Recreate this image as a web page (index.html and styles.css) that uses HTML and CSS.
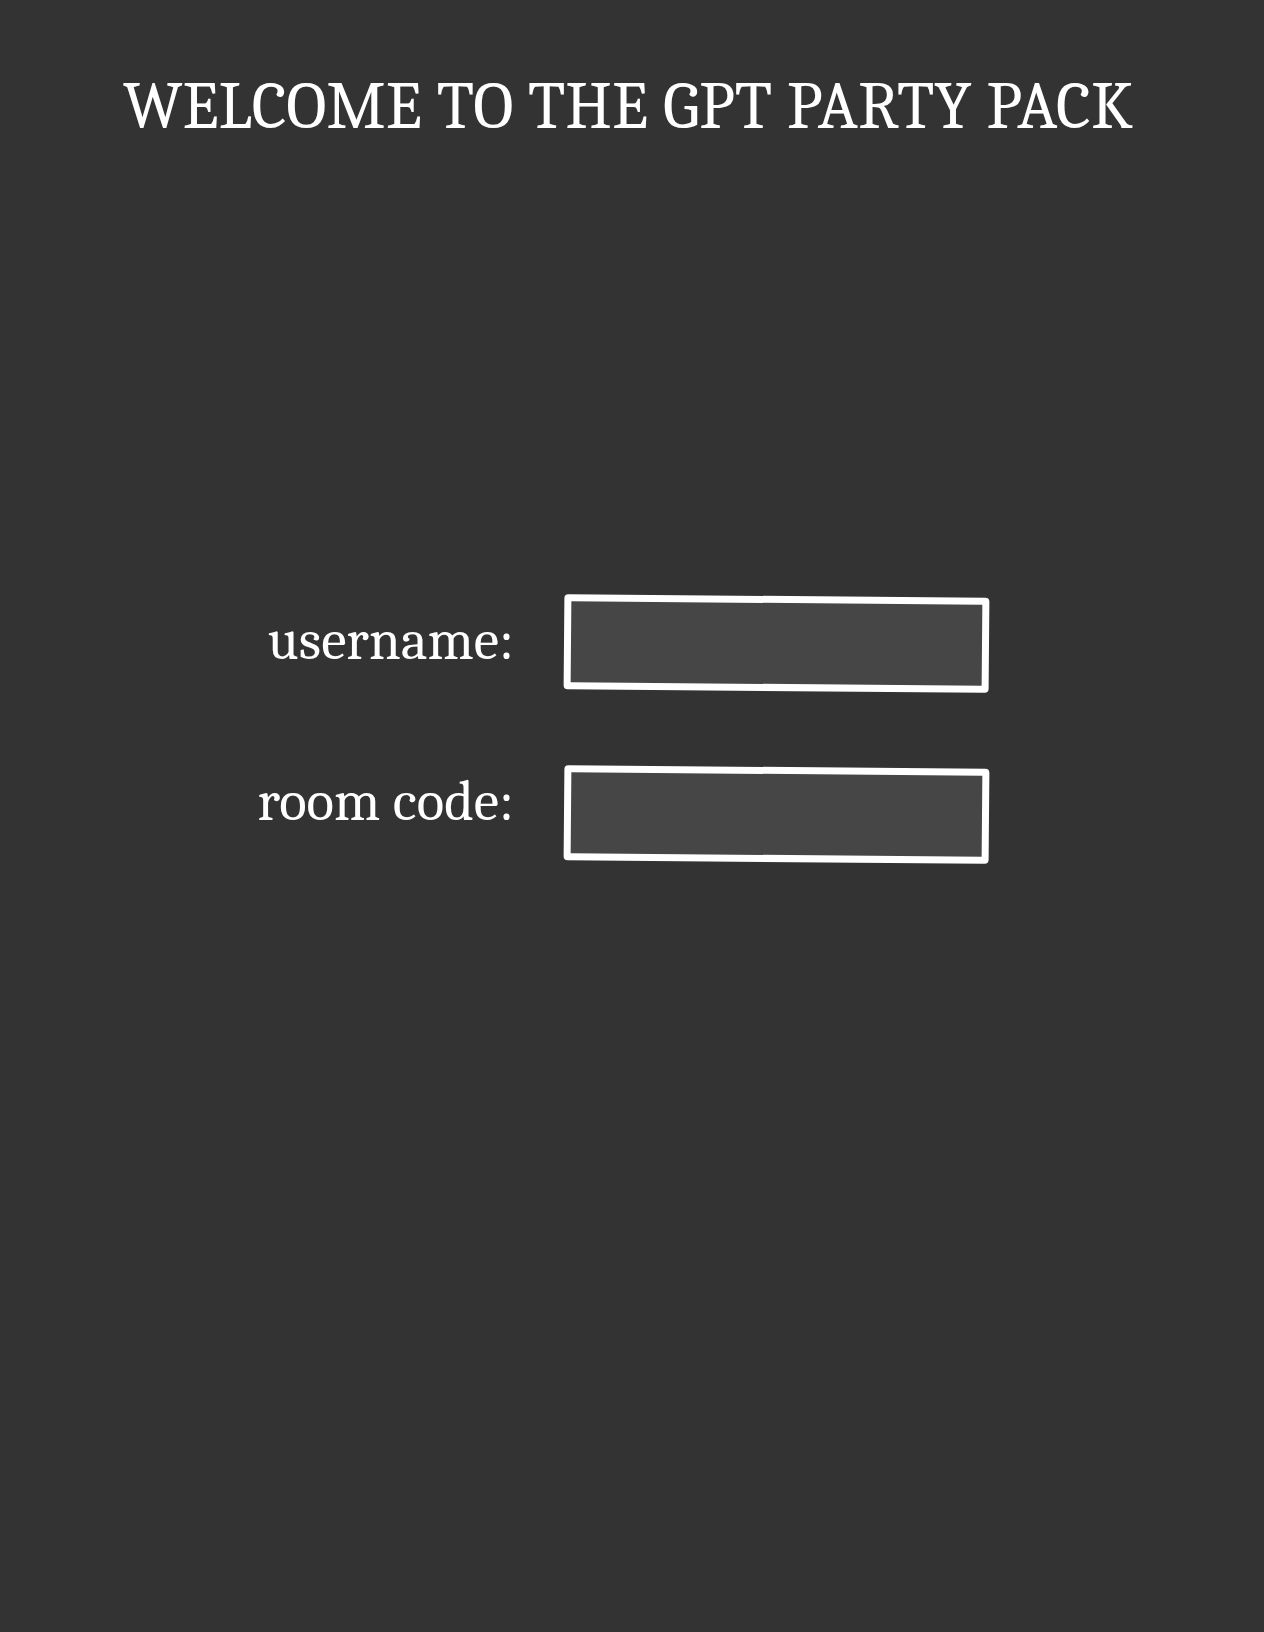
FILE: index.html
```html
<!DOCTYPE html>
<html>
<head>
    <title>GPT Party Pack</title>
    <link rel="stylesheet" href="styles.css">
</head>
<body>
    <h1 class="title">WELCOME TO THE GPT PARTY PACK</h1>
    <div class="join-form">
        <label class="field-label" for="username">username:</label>
        <input class="field-input" type="text" id="username">
        <label class="field-label room-label" for="room-code">room code:</label>
        <input class="field-input" type="text" id="room-code">
    </div>
</body>
</html>
```

FILE: styles.css
```css
body {
    font-family: Caladea, "DejaVu Serif Condensed", "Liberation Serif", serif;
    margin: 0;
    padding: 0;
    background-color: #333333;
    color: #fff;
    min-height: 100vh;
}
.title {
    margin: 0;
    padding-top: 67px;
    padding-right: 8px;
    text-align: center;
    font-size: 67px;
    font-weight: normal;
    line-height: 80px;
}
.join-form {
    display: grid;
    grid-template-columns: 514px 425px;
    column-gap: 50px;
    row-gap: 76px;
    margin-top: 449px;
    align-items: center;
}
.field-label {
    justify-self: end;
    font-size: 57px;
    margin-bottom: 6px;
}
.room-label {
    margin-bottom: 26px;
}
.field-input {
    box-sizing: border-box;
    width: 425px;
    height: 95px;
    background: #464646;
    border: 7px solid #fff;
    border-radius: 4px;
    color: #fff;
    font-size: 40px;
    transform: rotate(0.5deg);
}
```
